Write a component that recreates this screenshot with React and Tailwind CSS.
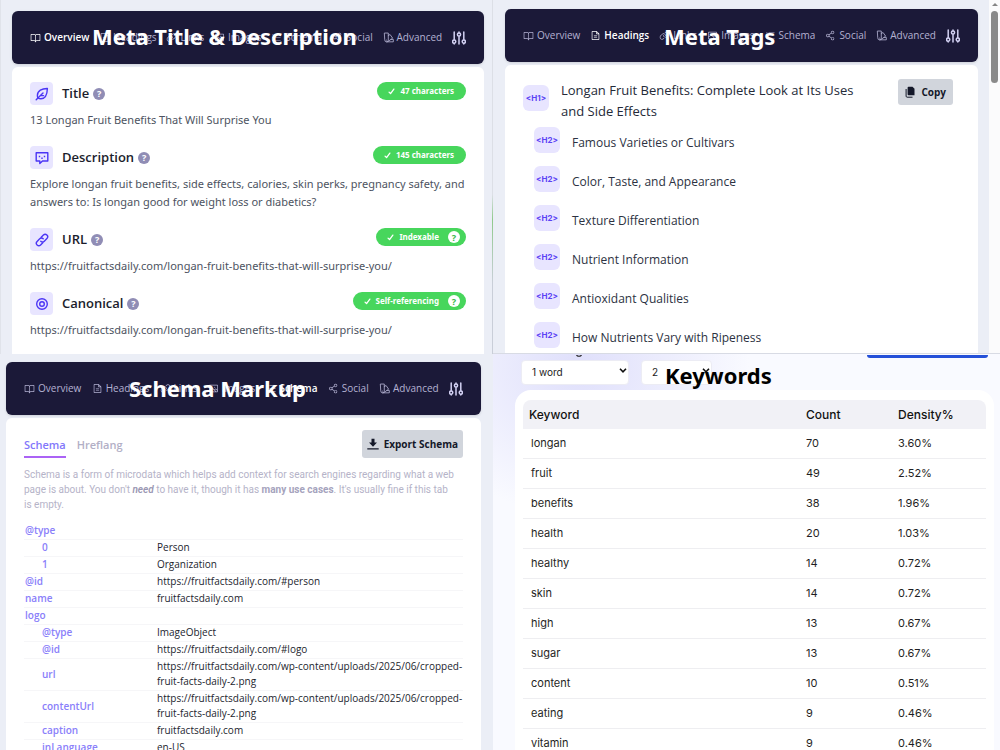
import React from "react";
import {
  PiBookOpen,
  PiFileText,
  PiLink,
  PiImage,
  PiListBullets,
  PiShareNetwork,
} from "react-icons/pi";

const sans = "font-['Noto_Sans','Open_Sans',sans-serif]";
const humanist = "font-['Open_Sans','Noto_Sans',sans-serif]";
const geometric = "font-['Inter','Lato',sans-serif]";

function SwatchesIcon({ className }) {
  return (
    <svg viewBox="0 0 16 16" className={className} fill="none" stroke="currentColor" strokeWidth="1.2" strokeLinejoin="round" strokeLinecap="round" aria-hidden="true">
      <path d="M2.5 1.5h5.2v10.2a2.6 2.6 0 0 1-5.2 0Z" />
      <path d="m7.7 5 2.6-1.3 3.7 5.3-7 5" />
      <path d="M11.5 10.8H15v3.5H5.2M5.1 11.7v.1" />
    </svg>
  );
}

const NAV_ITEMS = [
  { name: "Overview", Icon: PiBookOpen },
  { name: "Headings", Icon: PiFileText },
  { name: "Links", Icon: PiLink },
  { name: "Images", Icon: PiImage },
  { name: "Schema", Icon: PiListBullets },
  { name: "Social", Icon: PiShareNetwork },
  { name: "Advanced", Icon: SwatchesIcon },
];

function SlidersIcon() {
  return (
    <svg viewBox="0 0 14 14" className="size-3.5" fill="none" stroke="currentColor" strokeWidth="1.5" strokeLinecap="round" aria-hidden="true">
      <path d="M2.2 1v7.6M2.2 12.5v.5M7 1v.6M7 5.4V13M11.8 1v7.6M11.8 12.5v.5" />
      <circle cx="2.2" cy="10.6" r="1.6" />
      <circle cx="7" cy="3.5" r="1.6" />
      <circle cx="11.8" cy="10.6" r="1.6" />
    </svg>
  );
}

function NavBar({ active, title, titleClass }) {
  return (
    <header className="relative flex h-[53px] shrink-0 items-center rounded-md bg-[#1b1938] px-[18px] shadow-sm">
      <nav className={"flex min-w-0 flex-1 items-center justify-between " + humanist}>
        {NAV_ITEMS.map(({ name, Icon }) => (
          <a
            key={name}
            href="#"
            className={
              name === active
                ? "flex items-center gap-[3px] text-[10px] font-semibold text-white"
                : "flex items-center gap-[3px] text-[10px] font-medium text-[#b4b2d2]"
            }
          >
            <Icon className="size-[11px]" />
            {name}
          </a>
        ))}
        <button type="button" aria-label="Settings" className="text-[#d3d1f3]">
          <SlidersIcon />
        </button>
      </nav>
      <h1 className={titleClass}>{title}</h1>
    </header>
  );
}

function QuillIcon() {
  return (
    <svg viewBox="0 0 14 14" className="size-3.5" fill="none" stroke="currentColor" strokeWidth="1.4" strokeLinejoin="round" strokeLinecap="round" aria-hidden="true">
      <path d="M12.4 1.5C7 1.4 2.4 3.6 2.4 8.4c0 1.4.5 2.6.5 2.6s1.3.8 3 .8c4.5 0 6.3-4.8 6.5-10.3Z" />
      <path d="M1.2 12.8 8 6M6.2 8.6h2.4" />
    </svg>
  );
}

function MessageIcon() {
  return (
    <svg viewBox="0 0 14 14" className="size-3.5" fill="none" stroke="currentColor" strokeWidth="1.4" strokeLinejoin="round" aria-hidden="true">
      <path d="M1.2 1.7h11.6v8.3H7.5L4.8 12.6V10H1.2Z" />
      <path d="M4.5 4.8v1.4M9.5 4.8v1.4M6.3 7.2h1.4" />
    </svg>
  );
}

function ChainIcon() {
  return (
    <svg viewBox="0 0 14 14" className="size-3.5" fill="none" stroke="currentColor" strokeWidth="1.4" strokeLinecap="round" aria-hidden="true">
      <path d="m6.2 4.3 2.2-2.2a2.4 2.4 0 0 1 3.5 3.5L9.3 8.2a2.4 2.4 0 0 1-3.5 0" />
      <path d="m7.8 9.7-2.2 2.2a2.4 2.4 0 0 1-3.5-3.5l2.6-2.6a2.4 2.4 0 0 1 3.5 0" />
    </svg>
  );
}

function TargetIcon() {
  return (
    <svg viewBox="0 0 14 14" className="size-3.5" fill="none" stroke="currentColor" strokeWidth="1.4" aria-hidden="true">
      <circle cx="7" cy="7" r="5.3" />
      <circle cx="7" cy="7" r="2.3" />
    </svg>
  );
}

function CheckIcon() {
  return (
    <svg viewBox="0 0 8 8" className="size-[7px]" fill="none" stroke="currentColor" strokeWidth="1.5" strokeLinecap="round" strokeLinejoin="round" aria-hidden="true">
      <path d="m1.2 4.7 1.7 1.7L6.7 1.3" />
    </svg>
  );
}

const OVERVIEW = [
  { label: "Title", Icon: QuillIcon, badge: "47 characters", text: "13 Longan Fruit Benefits That Will Surprise You" },
  {
    label: "Description",
    Icon: MessageIcon,
    badge: "145 characters",
    text: "Explore longan fruit benefits, side effects, calories, skin perks, pregnancy safety, and answers to: Is longan good for weight loss or diabetics?",
  },
  { label: "URL", Icon: ChainIcon, badge: "Indexable", help: true, text: "https://fruitfactsdaily.com/longan-fruit-benefits-that-will-surprise-you/" },
  { label: "Canonical", Icon: TargetIcon, badge: "Self-referencing", help: true, text: "https://fruitfactsdaily.com/longan-fruit-benefits-that-will-surprise-you/" },
];

function OverviewPanel() {
  return (
    <section className="flex min-h-0 overflow-hidden bg-[#ebeef6]">
      <div className="flex min-w-0 flex-1 flex-col gap-[3px] border-l border-[#e0e3ea] pr-2 pl-[11px] pt-[11px]">
        <NavBar
          active="Overview"
          title="Meta Title & Description"
          titleClass="absolute top-[9px] left-20 text-[22px] leading-8 font-bold whitespace-nowrap text-white"
        />
        <div className="flex flex-1 flex-col gap-[17px] rounded-t-md bg-white px-[18px] pt-[15px]">
          {OVERVIEW.map(({ label, Icon, badge, help, text }) => (
            <article key={label} className="flex flex-col gap-1.5">
              <div className="flex h-[23px] items-start justify-between">
                <div className="flex items-center">
                  <span className="mr-[9px] flex size-[23px] items-center justify-center rounded bg-[#e8e5ff] text-[#4b35f5]">
                    <Icon />
                  </span>
                  <h2 className={"text-[13px] font-semibold text-[#1b1d2c] " + humanist}>{label}</h2>
                  <button type="button" aria-label={"About " + label} className="ml-1 flex size-3 items-center justify-center rounded-full bg-[#908db5] text-[9px] leading-none font-bold text-white">
                    ?
                  </button>
                </div>
                <span className="flex h-[18px] items-center rounded-full bg-[#47d65c] pr-3 pl-[11px] text-[8px] font-bold text-white has-[button]:pr-1.5">
                  <CheckIcon />
                  <span className="ml-[5px]">{badge}</span>
                  {help && (
                    <button type="button" aria-label={"About " + badge} className="ml-[9px] flex size-3 items-center justify-center rounded-full bg-white text-[9px] leading-none font-bold text-[#36b94a]">
                      ?
                    </button>
                  )}
                </span>
              </div>
              <p className="text-[11px] leading-[18px] text-[#4d5361]">{text}</p>
            </article>
          ))}
        </div>
      </div>
      <div className="w-px bg-linear-to-b from-[#dcdfe6] from-55% via-[#8fc98b] via-62% to-[#c9ced8] to-80%" />
    </section>
  );
}

const HEADINGS = [
  "Famous Varieties or Cultivars",
  "Color, Taste, and Appearance",
  "Texture Differentiation",
  "Nutrient Information",
  "Antioxidant Qualities",
  "How Nutrients Vary with Ripeness",
];

function HeadingTag({ level }) {
  return (
    <span className={"flex size-[26px] shrink-0 items-center justify-center rounded-md bg-[#e8e5ff] text-[8px] font-bold text-[#5b43f5] " + geometric}>
      {"<" + level + ">"}
    </span>
  );
}

function HeadingsPanel() {
  return (
    <section className="flex min-h-0 overflow-hidden border-b border-[#d8dbe4] bg-[#ebeef6]">
      <div className="flex min-w-0 flex-1 flex-col gap-[3px] pt-[9px] pr-[11px] pl-3">
        <NavBar
          active="Headings"
          title="Meta Tags"
          titleClass="absolute top-[11px] left-[159px] text-[22px] leading-8 font-bold whitespace-nowrap text-white"
        />
        <div className={"flex flex-1 items-start justify-between rounded-t-md bg-white pt-3.5 pr-[25px] pl-[18px] " + humanist}>
          <div className="flex flex-col">
            <div className="flex items-start gap-3">
              <span className="pt-1.5">
                <HeadingTag level="H1" />
              </span>
              <h2 className="max-w-[310px] pt-px text-[13px] leading-[21px] text-[#242a38]">
                Longan Fruit Benefits: Complete Look at Its Uses and Side Effects
              </h2>
            </div>
            <ul className="mt-[5px] ml-[11px] flex flex-col gap-[13px]">
              {HEADINGS.map((text) => (
                <li key={text} className="flex h-[26px] items-start gap-3">
                  <HeadingTag level="H2" />
                  <span className="pt-[7px] text-[12px] leading-[18px] text-[#2c3242]">{text}</span>
                </li>
              ))}
            </ul>
          </div>
          <button type="button" className="flex h-[26px] items-center gap-1.5 rounded-[3px] bg-[#d1d5dc] px-[7px] text-[10px] font-bold text-[#141829]">
            <svg viewBox="0 0 10 12" className="h-3 w-2.5" aria-hidden="true">
              <path d="M3.5.8h4L9.5 2.8v6.4H3.5a.9.9 0 0 1-.9-.9V1.7c0-.5.4-.9.9-.9Z" fill="currentColor" />
              <path d="M1.1 3v7.2c0 .6.4 1 1 1H7.5" fill="none" stroke="currentColor" />
            </svg>
            Copy
          </button>
        </div>
      </div>
      <div className="flex w-[11px] flex-col items-center gap-[5px] bg-[#fbfbfc] pt-[3px]">
        <svg viewBox="0 0 6 3" className="h-[3px] w-1.5" fill="#858585" aria-hidden="true">
          <path d="M3 0 6 3H0Z" />
        </svg>
        <div className="h-[72px] w-[7px] rounded-full bg-[#8a8a8a]" />
      </div>
    </section>
  );
}

const SCHEMA = [
  { name: "@type", value: "" },
  { name: "0", value: "Person", nested: true },
  { name: "1", value: "Organization", nested: true },
  { name: "@id", value: "https://fruitfactsdaily.com/#person" },
  { name: "name", value: "fruitfactsdaily.com" },
  { name: "logo", value: "" },
  { name: "@type", value: "ImageObject", nested: true },
  { name: "@id", value: "https://fruitfactsdaily.com/#logo", nested: true },
  { name: "url", value: "https://fruitfactsdaily.com/wp-content/uploads/2025/06/cropped-fruit-facts-daily-2.png", nested: true },
  { name: "contentUrl", value: "https://fruitfactsdaily.com/wp-content/uploads/2025/06/cropped-fruit-facts-daily-2.png", nested: true },
  { name: "caption", value: "fruitfactsdaily.com", nested: true },
  { name: "inLanguage", value: "en-US", nested: true },
];

function SchemaPanel() {
  return (
    <section className="flex min-h-0 flex-col gap-[3px] overflow-hidden bg-[#ebeef6] pt-2 pr-3 pl-1.5">
      <NavBar
        active="Schema"
        title="Schema Markup"
        titleClass="absolute top-2.5 left-[123px] text-[22px] leading-8 font-bold whitespace-nowrap text-white"
      />
      <div className={"flex-1 rounded-t-md bg-white px-[18px] pt-3 " + humanist}>
        <div className="flex items-start justify-between">
          <div className="flex h-7 gap-[11px] text-[11px] leading-[18px] font-semibold">
            <button type="button" className="border-b-2 border-[#ab63f5] pt-1 text-[#8377fb]">Schema</button>
            <button type="button" className="border-b-2 border-transparent pt-1 text-[#b2afc6]">Hreflang</button>
          </div>
          <button type="button" className="flex h-7 items-center gap-[5px] rounded-[3px] bg-[#d1d5dc] px-[5px] text-[10px] font-bold text-[#141829]">
            <svg viewBox="0 0 12 12" className="size-3" fill="currentColor" aria-hidden="true">
              <path d="M4.5.8h3v3.7H10L6 8.7 2 4.5h2.5ZM.3 10.2h11.4v1.2H.3Z" />
            </svg>
            Export Schema
          </button>
        </div>
        <p className="mt-[9px] pr-1.5 font-['Roboto','Noto_Sans',sans-serif] text-[10px] leading-[15px] text-[#b5b3c8]">
          Schema is a form of microdata which helps add context for search engines regarding what a web page is about. You don't{" "}
          <em className="font-semibold text-[#9a97b3]">need</em> to have it, though it has{" "}
          <strong className="font-bold text-[#a5a3bd]">many use cases</strong>. It's usually fine if this tab is empty.
        </p>
        <table className="mt-[11px] w-full table-fixed border-collapse text-left text-[10px] leading-[15px]">
          <tbody>
            {SCHEMA.map(({ name, value, nested }, i) => (
              <tr key={i} className="border-b border-[#f6f6f8]">
                <th scope="row" className={nested ? "w-[133px] pb-px pl-[18px] font-semibold text-[#8a80fa]" : "w-[133px] pb-px pl-px font-semibold text-[#8a80fa]"}>
                  {name}
                </th>
                <td className="h-[15px] pb-px text-[#23252e]">{value}</td>
              </tr>
            ))}
          </tbody>
        </table>
      </div>
    </section>
  );
}

const KEYWORDS = [
  ["longan", "70", "3.60%"],
  ["fruit", "49", "2.52%"],
  ["benefits", "38", "1.96%"],
  ["health", "20", "1.03%"],
  ["healthy", "14", "0.72%"],
  ["skin", "14", "0.72%"],
  ["high", "13", "0.67%"],
  ["sugar", "13", "0.67%"],
  ["content", "10", "0.51%"],
  ["eating", "9", "0.46%"],
  ["vitamin", "9", "0.46%"],
];

function PickBox({ label, value, boxClass }) {
  return (
    <div className={boxClass}>
      <select aria-label={label} defaultValue={value} className="h-[25px] w-full appearance-none rounded border border-[#ececf4] bg-white pl-2.5 text-[10px] text-[#222]">
        <option>{value}</option>
      </select>
      <svg viewBox="0 0 8 5" className="pointer-events-none absolute top-2.5 right-0.5 h-[5px] w-2" fill="none" stroke="#111" strokeWidth="1.6" aria-hidden="true">
        <path d="m1 .8 3 3 3-3" />
      </svg>
    </div>
  );
}

function KeywordsPanel() {
  return (
    <section className={"relative flex min-h-0 flex-col overflow-hidden bg-[#f9faff] bg-[radial-gradient(ellipse_170px_150px_at_17%_3%,#dfdffb,transparent)] pr-1.5 pl-[22px] " + geometric}>
      <div className="flex h-9 shrink-0 items-start justify-between pr-1.5 pl-1.5">
        <div className="flex gap-3 pt-1">
          <PickBox label="Phrase length" value="1 word" boxClass="relative w-[108px]" />
          <PickBox label="Minimum count" value="2" boxClass="relative w-[71px]" />
        </div>
        <button type="button" aria-label="Check" className="mt-px h-[3px] w-[121px] rounded-b bg-[#2450d8]" />
      </div>
      <svg viewBox="0 0 6 2" className="absolute top-px left-[83px] h-0.5 w-1.5" fill="none" stroke="#111" strokeWidth="1.2" aria-hidden="true">
        <path d="M.5.2c1 1.4 4 1.4 5 0" />
      </svg>
      <h1 className={"absolute top-[5px] left-[172px] text-[22px] leading-8 font-bold text-black " + sans}>Keywords</h1>
      <div className="flex-1 rounded-t-2xl bg-white px-2 pt-2.5">
        <table className="w-full table-fixed border-separate border-spacing-0 text-left">
          <thead>
            <tr className="h-[29px] text-[12px] text-[#111]">
              <th scope="col" className="rounded-tl-lg bg-[#f1f1f6] py-0 pl-1.5 font-medium">Keyword</th>
              <th scope="col" className="w-[92px] bg-[#f1f1f6] p-0 font-medium">Count</th>
              <th scope="col" className="w-[88px] rounded-tr-lg bg-[#f1f1f6] p-0 font-medium">Density%</th>
            </tr>
          </thead>
          <tbody>
            {KEYWORDS.map(([word, count, density]) => (
              <tr key={word} className="h-[30px] text-[11px] text-[#1f1f24]">
                <td className="border-b border-[#eeeef1] py-0 pl-2">{word}</td>
                <td className="border-b border-[#eeeef1] p-0">{count}</td>
                <td className="border-b border-[#eeeef1] p-0">{density}</td>
              </tr>
            ))}
          </tbody>
        </table>
      </div>
    </section>
  );
}

export default function App() {
  return (
    <main className={"grid h-screen grid-cols-[493fr_507fr] grid-rows-[354fr_396fr] overflow-hidden bg-[#ebeef6] " + sans}>
      <OverviewPanel />
      <HeadingsPanel />
      <SchemaPanel />
      <KeywordsPanel />
    </main>
  );
}
